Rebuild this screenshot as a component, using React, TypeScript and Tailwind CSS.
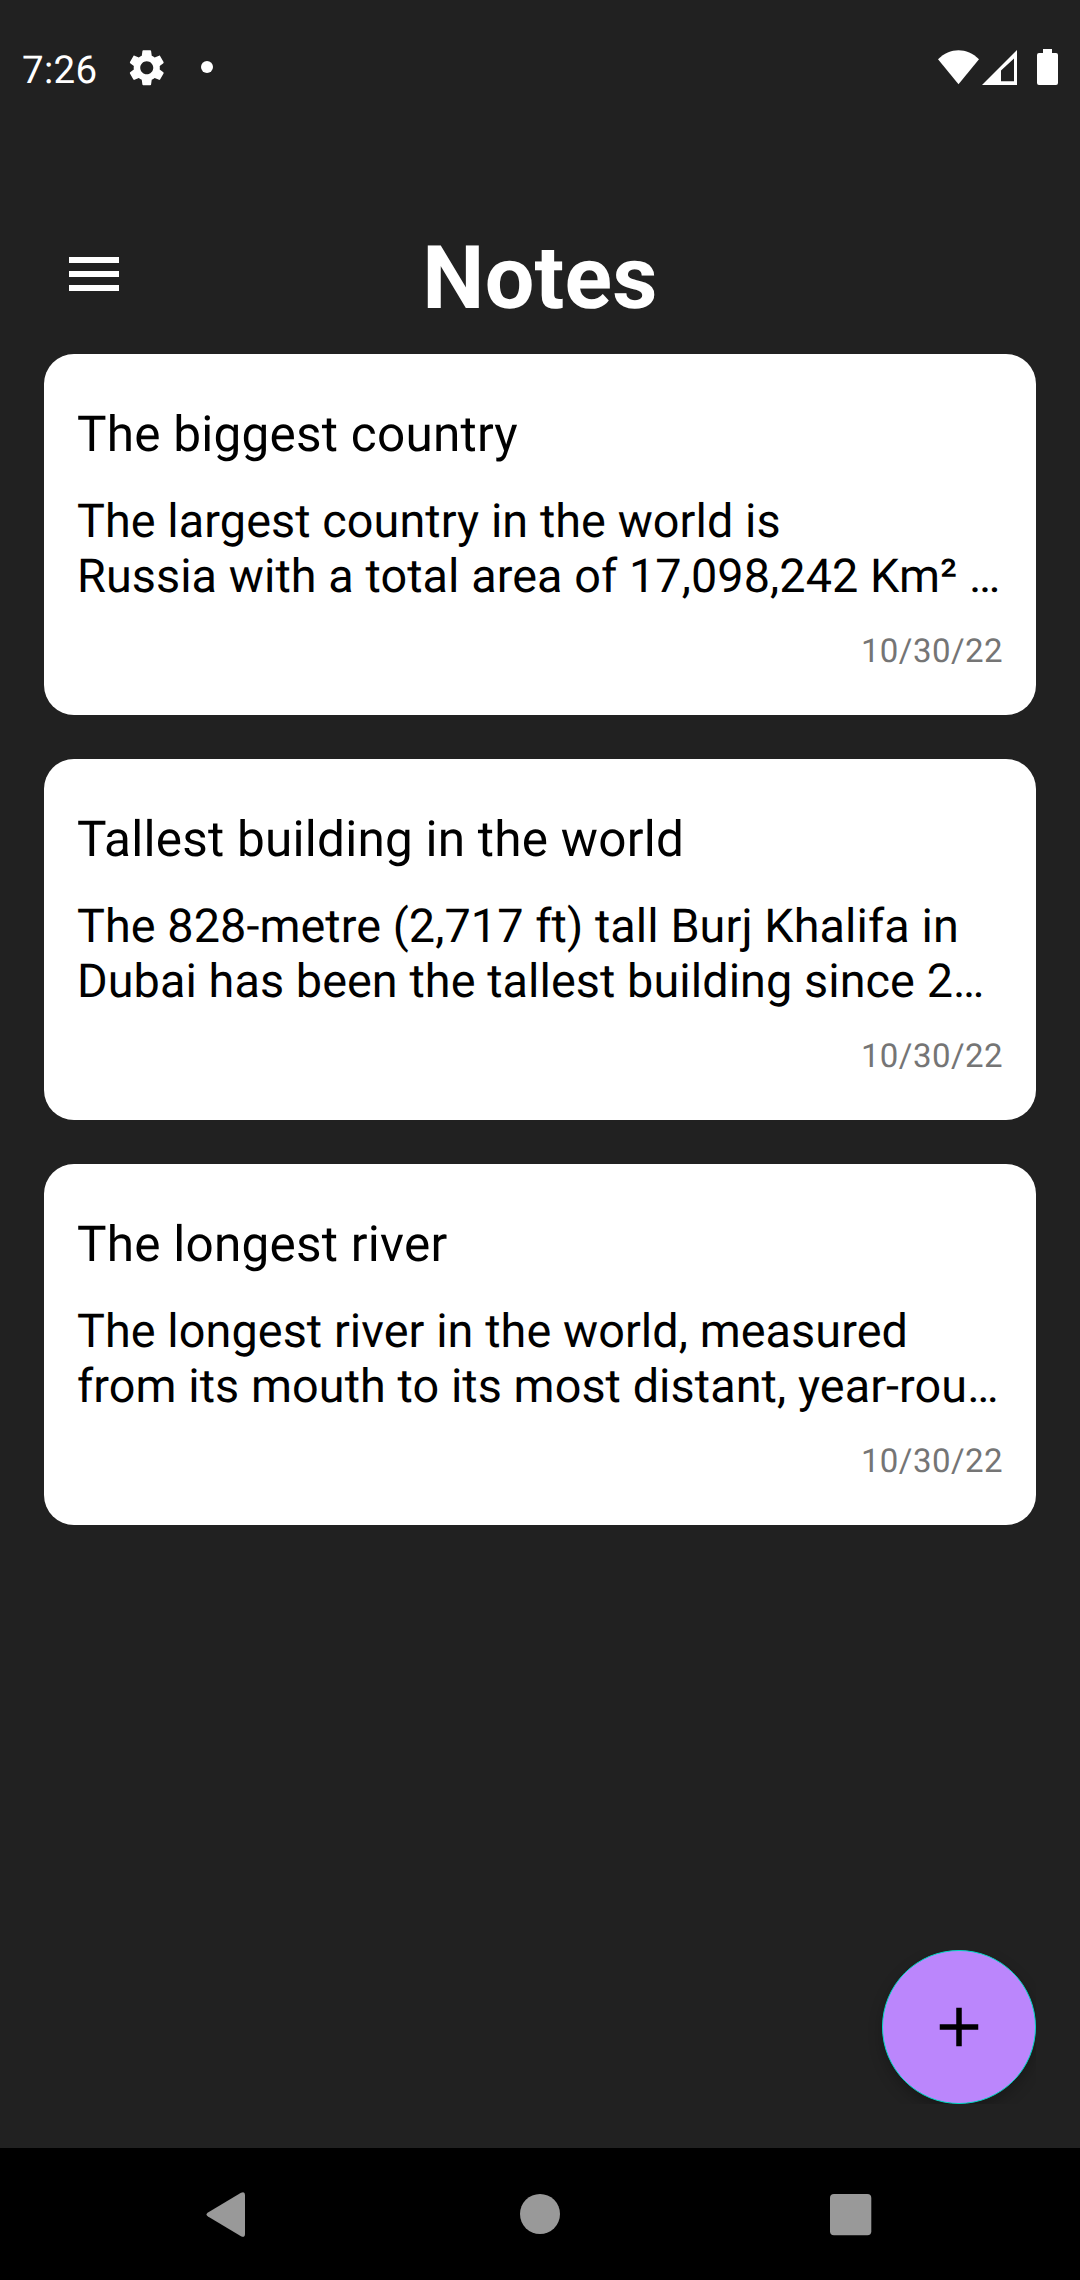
const notes = [
  { title: 'The biggest country', lines: ['The largest country in the world is', 'Russia with a total area of 17,098,242 Km² …'] },
  { title: 'Tallest building in the world', lines: ['The 828-metre (2,717 ft) tall Burj Khalifa in', 'Dubai has been the tallest building since 2…'] },
  { title: 'The longest river', lines: ['The longest river in the world, measured', 'from its mouth to its most distant, year-rou…'] },
];

function Gear() {
  return (
    <svg className="mt-px size-[43.5px]" viewBox="0 0 24 24" fill="white">
      <path d="M19.14 12.94c.04-.3.06-.61.06-.94 0-.32-.02-.64-.07-.94l2.03-1.58c.18-.14.23-.41.12-.61l-1.92-3.32c-.12-.22-.37-.29-.59-.22l-2.39.96c-.5-.38-1.03-.7-1.62-.94l-.36-2.54c-.04-.24-.24-.41-.48-.41h-3.84c-.24 0-.43.17-.47.41l-.36 2.54c-.59.24-1.13.57-1.62.94l-2.39-.96c-.22-.08-.47 0-.59.22L2.74 8.87c-.12.21-.08.47.12.61l2.03 1.58c-.05.3-.09.63-.09.94s.02.64.07.94l-2.03 1.58c-.18.14-.23.41-.12.61l1.92 3.32c.12.22.37.29.59.22l2.39-.96c.5.38 1.03.7 1.62.94l.36 2.54c.05.24.24.41.48.41h3.84c.24 0 .44-.17.47-.41l.36-2.54c.59-.24 1.13-.56 1.62-.94l2.39.96c.22.08.47 0 .59-.22l1.92-3.32c.12-.22.07-.47-.12-.61l-2.01-1.58zM12 15.6c-1.98 0-3.6-1.62-3.6-3.6s1.62-3.6 3.6-3.6 3.6 1.62 3.6 3.6-1.62 3.6-3.6 3.6z" />
    </svg>
  );
}

export default function App() {
  return (
    <div className="relative flex h-[2280px] w-[1080px] flex-col bg-[#212121] font-[Roboto,sans-serif] [text-rendering:geometricPrecision]">
      <header className="flex h-[134px] shrink-0 items-center pr-[22px] pl-[22px] text-white">
        <span className="mt-[8px] w-[103px] text-[38.5px] leading-[44px] tracking-[0.3px]">7:26</span>
        <Gear />
        <span className="ml-[32.5px] size-[12px] rounded-full bg-white" />
        <svg className="ml-auto h-[36px] w-[120px]" viewBox="0 0 120 36" fill="white">
          <path d="M0 10.3C12-1.8 29-1.8 41 10.3L20.5 35.3Z" />
          <path fillRule="evenodd" d="M79 1V36H44ZM76 9.5L63 21.5V32.3H76Z" />
          <path d="M105 0h9v4h4q2 0 2 2v28q0 2-2 2h-17q-2 0-2-2v-28q0-2 2-2h4z" />
        </svg>
      </header>
      <div className="grid h-[220px] shrink-0 grid-cols-[1fr_auto_1fr] items-center pt-[60px]">
        <div className="ml-[69px] flex w-[50px] flex-col gap-[8px]">
          <span className="h-[6px] bg-white" />
          <span className="h-[6px] bg-white" />
          <span className="h-[6px] bg-white" />
        </div>
        <h1 className="mt-[10px] text-[88px] leading-[104px] font-bold tracking-[0.2px] text-white">Notes</h1>
      </div>
      <main className="flex flex-1 flex-col gap-[44px] px-[44px]">
        {notes.map((n) => (
          <article key={n.title} className="h-[361px] rounded-[30px] bg-white px-[33px] pt-[52px] text-black">
            <h2 className="text-[49.5px] leading-[58px] tracking-[0.23px]">{n.title}</h2>
            <p className="mt-[31px] text-[46.75px] leading-[55px] tracking-[0.08px] whitespace-pre">{n.lines.join('\n')}</p>
            <p className="mt-[27px] text-right text-[33px] leading-[39px] tracking-[0.45px] text-[#757575]">10/30/22</p>
          </article>
        ))}
      </main>
      <button className="absolute top-[1950px] right-[44px] flex size-[154px] items-center justify-center rounded-full border border-[#03dac5] bg-[#bb86fc] shadow-[0_6px_14px_rgba(0,0,0,0.25)] [clip-path:inset(0_0_0_-20px)]">
        <svg className="size-[66px]" viewBox="0 0 24 24">
          <path d="M19 13h-6v6h-2v-6H5v-2h6V5h2v6h6z" />
        </svg>
      </button>
      <nav className="flex h-[132px] shrink-0 items-start bg-black pt-[44px] pl-[206px]">
        <svg className="h-[46px] w-[667px]" viewBox="0 0 667 46" fill="#999">
          <path d="M2 20.5L35 .8Q39-1 39 3V42Q39 46 35 44.3L2 24.5Q-1 22.5 2 20.5Z" />
          <circle cx="334" cy="22" r="20" />
          <rect x="624" y="2" width="41.3" height="41.3" rx="4" />
        </svg>
      </nav>
    </div>
  );
}
